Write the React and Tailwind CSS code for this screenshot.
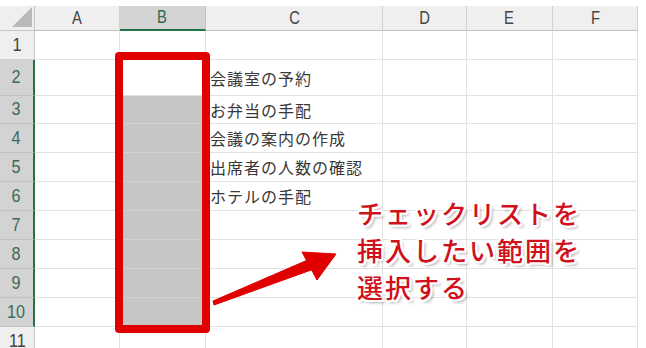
import React from "react";

const colWidths = ["w-[85px]", "w-[86px]", "w-[177px]", "w-[84px]", "w-[86px]", "w-[85px]"];
const letters = ["A", "B", "C", "D", "E", "F"];

const rows = [
  { n: 1, h: "h-[29px]", text: "" },
  { n: 2, h: "h-[36px]", text: "会議室の予約" },
  { n: 3, h: "h-[28px]", text: "お弁当の手配" },
  { n: 4, h: "h-[29px]", text: "会議の案内の作成" },
  { n: 5, h: "h-[29px]", text: "出席者の人数の確認" },
  { n: 6, h: "h-[29px]", text: "ホテルの手配" },
  { n: 7, h: "h-[29px]", text: "" },
  { n: 8, h: "h-[29px]", text: "" },
  { n: 9, h: "h-[29px]", text: "" },
  { n: 10, h: "h-[29px]", text: "" },
  { n: 11, h: "h-[29px]", text: "" },
];

const numFont = { fontFamily: '"Liberation Sans", Arial, sans-serif' };
const jpFont = { fontFamily: '"Noto Sans CJK JP", "Noto Sans", sans-serif' };

export default function App() {
  return (
    <div className="relative w-[646px] h-[348px] overflow-hidden bg-white pt-[6px]">
      {/* header row */}
      <div className="flex h-[25px]">
        <div className="relative w-[35px] h-full bg-[#efefef] border-r border-b border-[#c6c6c6] box-border">
          <svg className="absolute left-0 top-0" width="35" height="25" viewBox="0 0 35 25">
            <polygon points="12,21 32,1 32,21" fill="#b9b9b9" />
          </svg>
        </div>
        {letters.map((l, i) => {
          const sel = l === "B";
          return (
            <div
              key={l}
              className={
                colWidths[i] +
                " h-full box-border border-r flex items-center justify-center text-[18px] " +
                (sel
                  ? "bg-[#d3d3d3] border-r-[#c0c0c0] border-b-2 border-b-[#217346] text-[#2f6a4f]"
                  : "bg-[#efefef] border-r-[#d0d0d0] border-b border-b-[#c0c0c0] text-[#444]")
              }
              style={numFont}
            >
              <span className="inline-block scale-x-[0.82]">{l}</span>
            </div>
          );
        })}
      </div>

      {rows.map((r) => {
        const selRow = r.n >= 2 && r.n <= 10;
        return (
          <div key={r.n} className={"flex " + r.h}>
            <div
              className={
                "w-[35px] h-full box-border flex items-center justify-center text-[18px] border-b " +
                (selRow
                  ? "bg-[#d3d3d3] border-b-[#c2c2c2] border-r-2 border-r-[#217346] text-[#3a6b56]"
                  : "bg-[#efefef] border-b-[#d0d0d0] border-r border-r-[#c6c6c6] text-[#444]")
              }
              style={numFont}
            >
              <span className="inline-block scale-x-[0.9]">{r.n}</span>
            </div>
            {letters.map((l, i) => {
              const gray = l === "B" && r.n >= 3 && r.n <= 10;
              return (
                <div
                  key={l}
                  className={
                    colWidths[i] +
                    " h-full box-border border-r border-b flex items-center " +
                    (gray ? "bg-[#c6c6c6] border-[#d2d2d2]" : "bg-white border-[#e1e1e1]")
                  }
                >
                  {l === "C" && r.text ? (
                    <span
                      className="pl-[4px] text-[16px] tracking-[1px] text-[#383838] whitespace-nowrap"
                      style={jpFont}
                    >
                      {r.text}
                    </span>
                  ) : null}
                </div>
              );
            })}
          </div>
        );
      })}

      {/* red selection frame */}
      <div className="absolute left-[115px] top-[52px] w-[95px] h-[281px] border-[8px] border-[#e00000] rounded-[4px] box-border" />

      {/* arrow */}
      <svg className="absolute left-0 top-0" width="646" height="348" viewBox="0 0 646 348">
        <g fill="#e00000" stroke="#e00000" strokeLinejoin="round" strokeWidth="1">
          <polygon points="213,301 214,305 314,269 310,259" />
          <polygon points="336,254 302,252 317,280" />
        </g>
      </svg>

      {/* callout */}
      <div
        className="absolute left-[357px] top-[194px] text-[26px] leading-[37px] font-medium tracking-[2px] text-[#d0101b] whitespace-nowrap [text-shadow:2px_0_0_#fff,-2px_0_0_#fff,0_2px_0_#fff,0_-2px_0_#fff,2px_2px_0_#fff,-2px_-2px_0_#fff,2px_-2px_0_#fff,-2px_2px_0_#fff,3px_3px_3px_rgba(0,0,0,0.35)]"
        style={jpFont}
      >
        <div>チェックリストを</div>
        <div>挿入したい範囲を</div>
        <div>選択する</div>
      </div>
    </div>
  );
}
